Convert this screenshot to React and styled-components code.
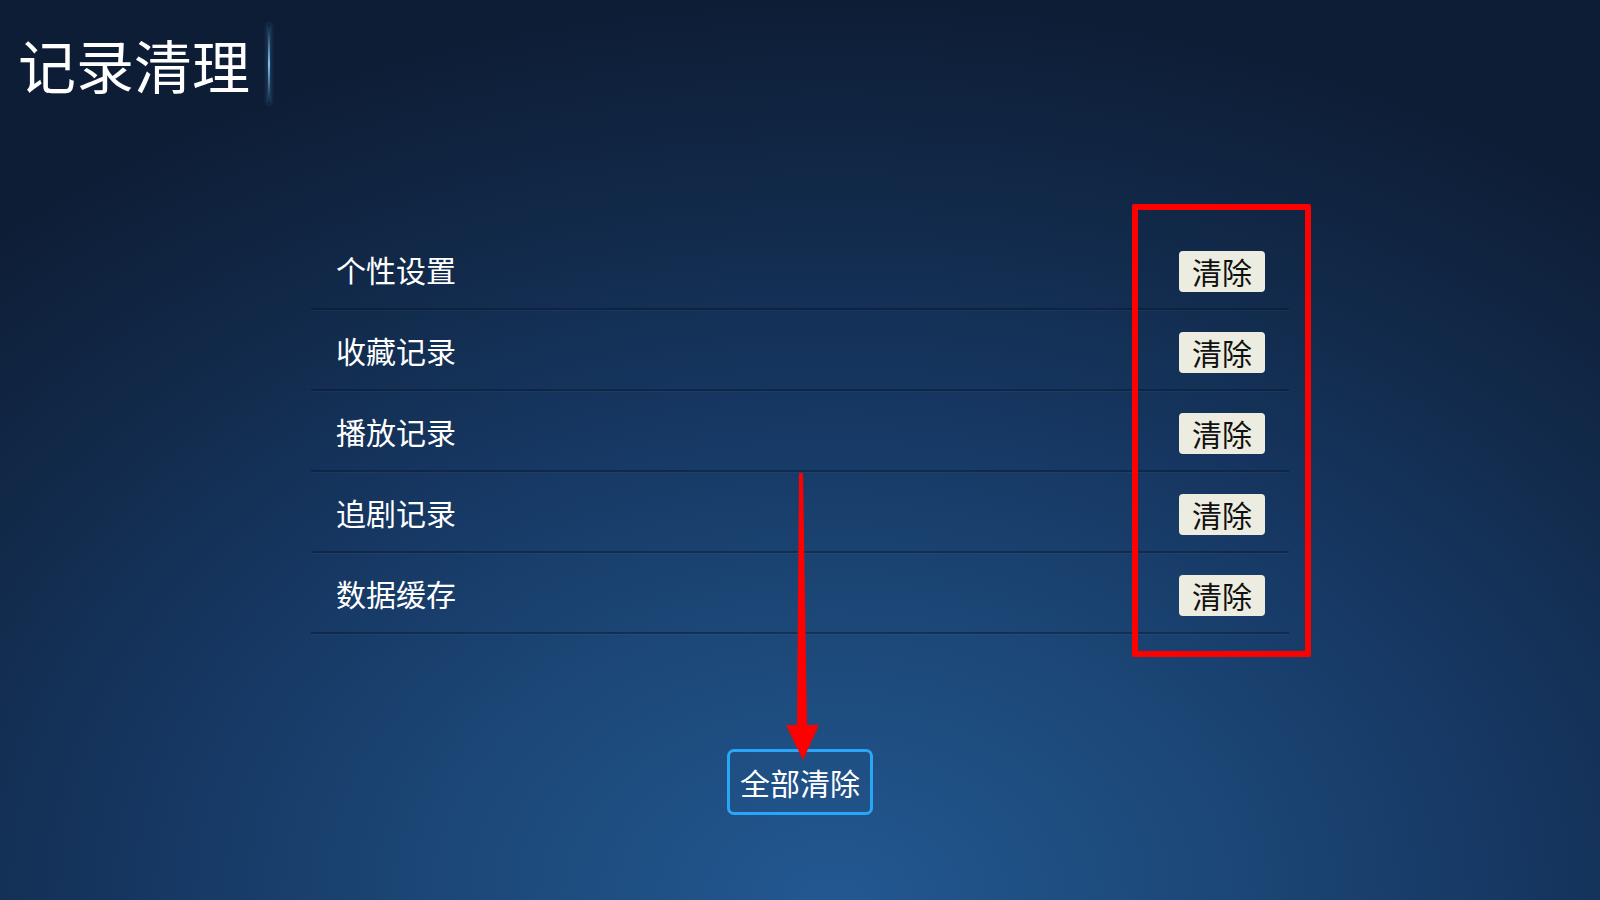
import styled, { createGlobalStyle } from "styled-components";

const GlobalStyle = createGlobalStyle`
  html, body {
    margin: 0;
    padding: 0;
    background: #0e1d36;
  }
  body {
    font-family: "Noto Sans CJK SC", "Noto Sans", sans-serif;
  }
`;

const Page = styled.div`
  position: relative;
  width: 1600px;
  height: 900px;
  overflow: hidden;
  background: radial-gradient(
    ellipse 78% 100% at 52% 100%,
    #225891 0%,
    #1c4878 30%,
    #163762 55%,
    #112847 80%,
    #0e1d36 100%
  );
`;

const Header = styled.header`
  height: 128px;
  display: flex;
  align-items: center;
  gap: 18px;
  padding-left: 18px;
  box-sizing: border-box;
`;

const Title = styled.h1`
  margin: 0;
  font-size: 58px;
  line-height: 1;
  font-weight: 400;
  color: #ffffff;
`;

const Glow = styled.span`
  width: 2px;
  height: 80px;
  background: linear-gradient(
    to bottom,
    rgba(120, 200, 255, 0) 0%,
    rgba(140, 210, 255, 0.9) 50%,
    rgba(120, 200, 255, 0) 100%
  );
  box-shadow: 0 0 4px rgba(90, 170, 240, 0.6);
`;

const List = styled.ul`
  list-style: none;
  margin: 101px auto 0;
  padding: 0;
  width: 978px;
`;

const Row = styled.li`
  height: 79px;
  display: flex;
  align-items: center;
  justify-content: space-between;
  padding: 0 24px 0 25px;
  border-bottom: 2px solid rgba(8, 18, 34, 0.4);
  box-shadow: 0 1px 0 rgba(120, 160, 210, 0.07);
`;

const Label = styled.span`
  font-size: 30px;
  color: #ffffff;
`;

const ClearButton = styled.button`
  width: 86px;
  height: 41px;
  margin-top: 6px;
  padding: 0;
  border: 0;
  border-radius: 4px;
  background: #ecede0;
  color: #111111;
  font-family: inherit;
  font-size: 30px;
  line-height: 41px;
`;

const Footer = styled.div`
  display: flex;
  justify-content: center;
  margin-top: 115px;
`;

const ClearAll = styled.button`
  width: 146px;
  height: 66px;
  box-sizing: border-box;
  border: 3px solid #29a6f8;
  border-radius: 7px;
  background: transparent;
  color: #ffffff;
  font-family: inherit;
  font-size: 30px;
  padding: 0;
`;

const Highlight = styled.div`
  position: absolute;
  left: 1132px;
  top: 204px;
  width: 179px;
  height: 453px;
  box-sizing: border-box;
  border: 6px solid #ff0000;
  border-radius: 2px;
  pointer-events: none;
`;

const Overlay = styled.svg`
  position: absolute;
  left: 0;
  top: 0;
  pointer-events: none;
`;

const items = ["个性设置", "收藏记录", "播放记录", "追剧记录", "数据缓存"];

export default function App() {
  return (
    <>
      <GlobalStyle />
      <Page>
        <Header>
          <Title>记录清理</Title>
          <Glow />
        </Header>
        <List>
          {items.map((item) => (
            <Row key={item}>
              <Label>{item}</Label>
              <ClearButton>清除</ClearButton>
            </Row>
          ))}
        </List>
        <Footer>
          <ClearAll>全部清除</ClearAll>
        </Footer>
        <Highlight />
        <Overlay width="1600" height="900" viewBox="0 0 1600 900">
          <polygon points="799,473 803,473 807,726 797,726" fill="#ff0000" />
          <polygon points="786,725 819,725 803,760" fill="#ff0000" />
        </Overlay>
      </Page>
    </>
  );
}
